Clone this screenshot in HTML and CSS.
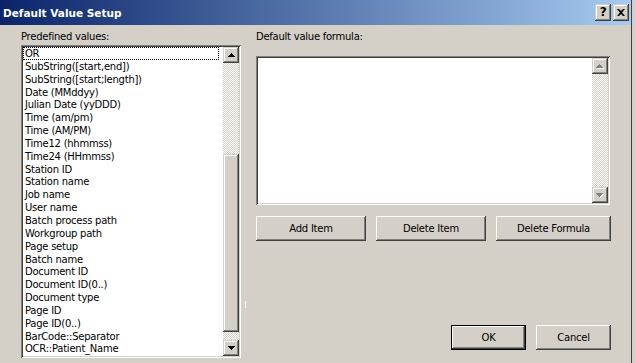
FILE: index.html
```html
<!DOCTYPE html>
<html>
<head>
    <title>Default Value Setup</title>
    <link rel="stylesheet" href="styles.css">
</head>
<body>
    <div class="window">
        <div class="titlebar">
            <span class="title">Default Value Setup</span>
            <div class="caption-buttons">
                <div class="cap-btn cap-help">?</div>
                <div class="cap-btn">
                    <svg width="8" height="7" viewBox="0 0 8 7"><path d="M0 0h2l2 2 2-2h2L5 3.5 8 7H6L4 5 2 7H0l3-3.5z" fill="#000"/></svg>
                </div>
            </div>
        </div>

        <div class="content">
            <div class="left-col">
                <div class="label">Predefined values:</div>
                <div class="listbox">
                    <ul class="items">
                        <li class="focused">OR</li>
                        <li>SubString([start,end])</li>
                        <li>SubString([start;length])</li>
                        <li>Date (MMddyy)</li>
                        <li>Julian Date (yyDDD)</li>
                        <li>Time (am/pm)</li>
                        <li>Time (AM/PM)</li>
                        <li>Time12 (hhmmss)</li>
                        <li>Time24 (HHmmss)</li>
                        <li>Station ID</li>
                        <li>Station name</li>
                        <li>Job name</li>
                        <li>User name</li>
                        <li>Batch process path</li>
                        <li>Workgroup path</li>
                        <li>Page setup</li>
                        <li>Batch name</li>
                        <li>Document ID</li>
                        <li>Document ID(0..)</li>
                        <li>Document type</li>
                        <li>Page ID</li>
                        <li>Page ID(0..)</li>
                        <li>BarCode::Separator</li>
                        <li>OCR::Patient_Name</li>
                    </ul>
                    <div class="vscroll">
                        <div class="sb-btn">
                            <svg width="7" height="4" viewBox="0 0 7 4"><path d="M3 0h1v1h1v1h1v1h1v1H0V3h1V2h1V1h1z" fill="#000"/></svg>
                        </div>
                        <div class="track track-top"></div>
                        <div class="thumb"></div>
                        <div class="track track-bottom"></div>
                        <div class="sb-btn">
                            <svg width="7" height="4" viewBox="0 0 7 4"><path d="M0 0h7v1H6v1H5v1H4v1H3V3H2V2H1V1H0z" fill="#000"/></svg>
                        </div>
                    </div>
                </div>
            </div>

            <div class="splitter"></div>

            <div class="right-col">
                <div class="label">Default value formula:</div>
                <div class="formula">
                    <div class="formula-text"></div>
                    <div class="vscroll">
                        <div class="sb-btn">
                            <svg width="8" height="5" viewBox="0 0 8 5"><path d="M4 1h1v1h1v1h1v1h1v1H1V4h1V3h1V2h1z" fill="#fff"/><path d="M3 0h1v1h1v1h1v1h1v1H0V3h1V2h1V1h1z" fill="#808080"/></svg>
                        </div>
                        <div class="track track-fill"></div>
                        <div class="sb-btn">
                            <svg width="8" height="5" viewBox="0 0 8 5"><path d="M1 1h7v1H7v1H6v1H5v1H4V4H3V3H2V2H1z" fill="#fff"/><path d="M0 0h7v1H6v1H5v1H4v1H3V3H2V2H1V1H0z" fill="#808080"/></svg>
                        </div>
                    </div>
                </div>

                <div class="btn-row">
                    <div class="btn btn-item">Add Item</div>
                    <div class="btn btn-item">Delete Item</div>
                    <div class="btn btn-wide">Delete Formula</div>
                </div>

                <div class="footer">
                    <div class="btn btn-dialog btn-default">OK</div>
                    <div class="btn btn-dialog">Cancel</div>
                </div>
            </div>
        </div>
    </div>
</body>
</html>
```

FILE: styles.css
```css
body {
    margin: 0;
    background: #d4d0c8;
    font-family: "DejaVu Sans", sans-serif;
    font-size: 10px;
    letter-spacing: -0.25px;
    color: #000;
    overflow: hidden;
}

.window {
    width: 631px;
    height: 363px;
    background: #d4d0c8;
    box-shadow: 1px 0 #404040;
}

/* title bar */
.titlebar {
    height: 25px;
    display: flex;
    align-items: center;
    justify-content: space-between;
    padding-left: 3px;
    background: linear-gradient(to right, #0a246a, #a6caf0);
}

.title {
    color: #fff;
    font-weight: bold;
    font-size: 10.5px;
    letter-spacing: 0;
}

.caption-buttons {
    display: flex;
    gap: 2px;
    margin-right: 2px;
}

.cap-btn {
    width: 16px;
    height: 17px;
    display: flex;
    align-items: center;
    justify-content: center;
    background: #d4d0c8;
    box-shadow: inset -1px -1px #404040, inset 1px 1px #d4d0c8, inset -2px -2px #808080, inset 2px 2px #fff;
}

.cap-help {
    font-weight: bold;
    font-size: 12px;
    line-height: 17px;
}

/* layout */
.content {
    display: flex;
    height: 338px;
    padding-left: 21px;
}

.left-col {
    width: 220px;
    padding-top: 5px;
}

.splitter {
    width: 1px;
    height: 7px;
    margin: 276px 0 0 4px;
    background: #fff;
}

.right-col {
    width: 355px;
    margin-left: 10px;
    padding-top: 5px;
    display: flex;
    flex-direction: column;
}

.label {
    height: 13px;
    line-height: 13px;
    white-space: nowrap;
}

/* sunken boxes */
.listbox,
.formula {
    display: flex;
    box-sizing: border-box;
    padding: 2px;
    background: #fff;
    box-shadow: inset 1px 1px #808080, inset -1px -1px #fff, inset 2px 2px #404040, inset -2px -2px #d4d0c8;
}

.listbox {
    margin-top: 2px;
    width: 220px;
    height: 313px;
}

.items {
    flex: 1;
    margin: 0;
    padding: 0;
    list-style: none;
    overflow: hidden;
}

.items li {
    height: 12.85px;
    line-height: 13px;
    padding-left: 2px;
    white-space: nowrap;
}

.items .focused {
    outline: 1px dotted #000;
    outline-offset: -1px;
    margin-right: 4px;
}

.formula {
    margin-top: 13px;
    width: 354px;
    height: 149px;
}

.formula-text {
    flex: 1;
}

/* scrollbars */
.vscroll {
    width: 16px;
    display: flex;
    flex-direction: column;
}

.sb-btn,
.thumb {
    background: #d4d0c8;
    box-shadow: inset -1px -1px #404040, inset 1px 1px #d4d0c8, inset -2px -2px #808080, inset 2px 2px #fff;
}

.sb-btn {
    height: 16px;
    flex: none;
    display: flex;
    align-items: center;
    justify-content: center;
}

.track {
    background-color: #fff;
    background-image: conic-gradient(#d4d0c8 25%, #fff 0 50%, #d4d0c8 0 75%, #fff 0);
    background-size: 2px 2px;
}

.track-top {
    height: 91px;
}

.thumb {
    height: 178px;
}

.track-bottom {
    height: 8px;
}

.track-fill {
    flex: 1;
}

/* push buttons */
.btn-row {
    display: flex;
    gap: 10px;
    margin-top: 11px;
}

.btn {
    height: 25px;
    display: flex;
    align-items: center;
    justify-content: center;
    box-sizing: border-box;
    background: #d4d0c8;
    box-shadow: inset -1px -1px #404040, inset 1px 1px #fff, inset -2px -2px #808080, inset 2px 2px #d4d0c8;
}

.btn-item {
    width: 110px;
}

.btn-wide {
    width: 115px;
}

.footer {
    display: flex;
    justify-content: flex-end;
    gap: 10px;
    margin-top: auto;
    margin-bottom: 13px;
}

.btn-dialog {
    width: 75px;
}

.btn-default {
    box-shadow: inset 0 0 0 1px #000, inset -2px -2px #404040, inset 2px 2px #fff, inset -3px -3px #808080;
}
```
